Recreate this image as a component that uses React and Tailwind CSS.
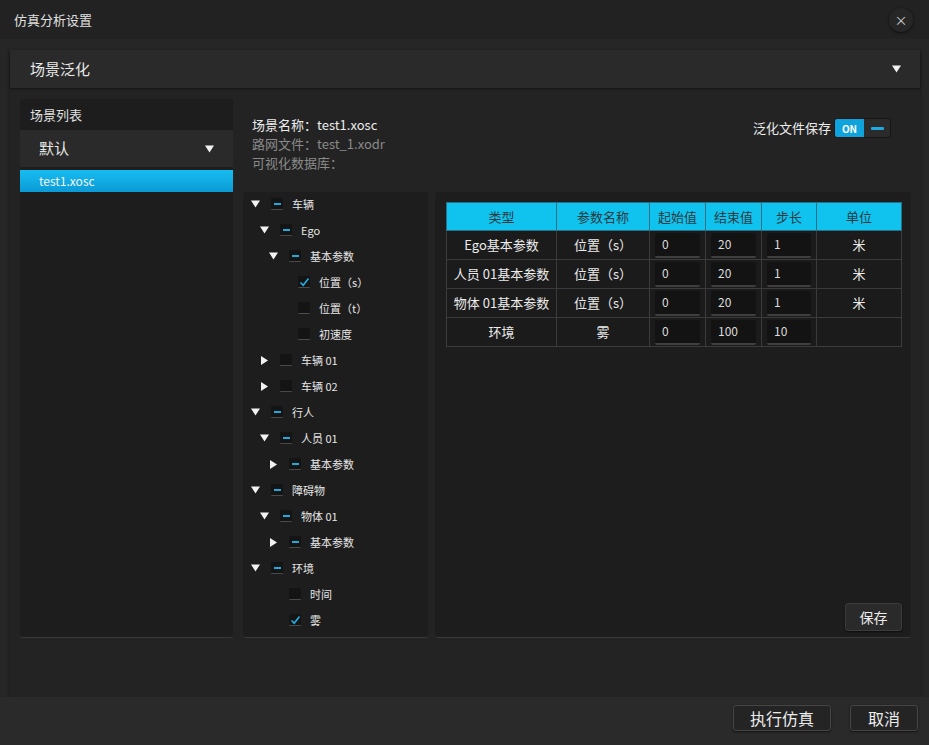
import React from 'react';

const tree = [
  { label: '车辆', level: 0, arrow: 'down', box: 'dash' },
  { label: 'Ego', level: 1, arrow: 'down', box: 'dash' },
  { label: '基本参数', level: 2, arrow: 'down', box: 'dash' },
  { label: '位置（s）', level: 3, arrow: null, box: 'check' },
  { label: '位置（t）', level: 3, arrow: null, box: 'empty' },
  { label: '初速度', level: 3, arrow: null, box: 'empty' },
  { label: '车辆 01', level: 1, arrow: 'right', box: 'empty' },
  { label: '车辆 02', level: 1, arrow: 'right', box: 'empty' },
  { label: '行人', level: 0, arrow: 'down', box: 'dash' },
  { label: '人员 01', level: 1, arrow: 'down', box: 'dash' },
  { label: '基本参数', level: 2, arrow: 'right', box: 'dash' },
  { label: '障碍物', level: 0, arrow: 'down', box: 'dash' },
  { label: '物体 01', level: 1, arrow: 'down', box: 'dash' },
  { label: '基本参数', level: 2, arrow: 'right', box: 'dash' },
  { label: '环境', level: 0, arrow: 'down', box: 'dash' },
  { label: '时间', level: 2, arrow: null, box: 'empty' },
  { label: '雾', level: 2, arrow: null, box: 'check' },
  { label: '', level: 2, arrow: null, box: 'empty' },
];

const indent = ['pl-[8px]', 'pl-[17px]', 'pl-[26px]', 'pl-[35px]'];

const rows = [
  { type: 'Ego基本参数', name: '位置（s）', start: '0', end: '20', step: '1', unit: '米' },
  { type: '人员 01基本参数', name: '位置（s）', start: '0', end: '20', step: '1', unit: '米' },
  { type: '物体 01基本参数', name: '位置（s）', start: '0', end: '20', step: '1', unit: '米' },
  { type: '环境', name: '雾', start: '0', end: '100', step: '10', unit: '' },
];

const DownTri = ({ className = '' }) => (
  <svg width="9" height="8" viewBox="0 0 9 8" className={className}>
    <path d="M0 0.5 L9 0.5 L4.5 7.5 Z" fill="#f2f2f2" />
  </svg>
);

const RightTri = () => (
  <svg width="9" height="9" viewBox="0 0 9 9">
    <path d="M1 0 L8 4.5 L1 9 Z" fill="#f2f2f2" />
  </svg>
);

const Box = ({ kind }) => (
  <div className="w-[12px] h-[12px] bg-[#141414] border-b border-[#4a4a4a] rounded-[1px] flex items-center justify-center">
    {kind === 'dash' && <div className="w-[7px] h-[2px] bg-[#1fa9dc]" />}
    {kind === 'check' && (
      <svg width="11" height="10" viewBox="0 0 11 10">
        <path d="M1.5 5.5 L4.2 8.2 L9.5 1.5" stroke="#1fb0e6" strokeWidth="1.6" fill="none" />
      </svg>
    )}
  </div>
);

const Cell = ({ children, className = '' }) => (
  <td className={`border border-[#3b3b3b] h-[29px] text-[13px] text-[#ececec] ${className}`}>{children}</td>
);

const InputCell = ({ value }) => (
  <td className="border border-[#3b3b3b] h-[29px] px-[5px] py-[1px]">
    <div className="h-[25px] bg-[#131313] border-b-2 border-[#3f3f3f] rounded-[2px] flex items-center pl-[7px] text-[12px] text-[#dcdcdc]">
      {value}
    </div>
  </td>
);

const App = () => {
  return (
    <div
      className="w-[929px] h-[745px] bg-[#262626] flex flex-col overflow-hidden text-[#e6e6e6]"
      style={{ fontFamily: '"Noto Sans CJK SC", "Noto Sans", sans-serif' }}
    >
      {/* title bar */}
      <div className="h-[39px] bg-[#222222] flex items-center justify-between pl-[14px] pr-[16px] shrink-0">
        <span className="text-[13px] text-[#e0e0e0]">仿真分析设置</span>
        <div className="w-[24px] h-[24px] rounded-full bg-[#262626] shadow-[0_1px_3px_rgba(0,0,0,0.6)] flex items-center justify-center text-[#cfcfcf] text-[13px] leading-none">
          ×
        </div>
      </div>

      {/* main panel */}
      <div className="pt-[11px] pl-[10px] pr-[9px] shrink-0">
        <div className="h-[647px] flex flex-col bg-[#232323] shadow-[0_2px_4px_rgba(0,0,0,0.35)]">
          <div className="h-[38px] bg-[#2a2a2a] flex items-center justify-between pl-[20px] pr-[19px] shadow-[0_1px_2px_rgba(0,0,0,0.5)] shrink-0">
            <span className="text-[15px] text-[#e8e8e8]">场景泛化</span>
            <DownTri />
          </div>

          <div className="flex pt-[11px] pl-[10px] pr-[9px] gap-[10px]">
            {/* scene list */}
            <div className="w-[213px] h-[539px] bg-[#1d1d1d] rounded-[3px] border-b border-[#3a3a3a] flex flex-col shrink-0">
              <div className="h-[31px] flex items-center pl-[10px] text-[13px] text-[#e0e0e0]">场景列表</div>
              <div className="h-[37px] bg-[#2a2a2a] flex items-center justify-between pl-[19px] pr-[19px]">
                <span className="text-[15px] text-[#e8e8e8]">默认</span>
                <DownTri />
              </div>
              <div className="mt-[3px] h-[22px] bg-gradient-to-b from-[#17bdf0] to-[#0b9ad6] flex items-center pl-[19px] text-[12px] text-[#f4f4f4]">
                test1.xosc
              </div>
            </div>

            <div className="flex-1 flex flex-col">
              {/* info */}
              <div className="h-[93px] flex justify-between">
                <div className="pl-[9px] pt-[16px] flex flex-col text-[13px] leading-[19px]">
                  <span className="text-[#ececec]">场景名称：test1.xosc</span>
                  <span className="text-[#8a8a8a]">路网文件：test_1.xodr</span>
                  <span className="text-[#8a8a8a]">可视化数据库：</span>
                </div>
                <div className="pt-[19px] pr-[20px] flex items-start gap-[3px]">
                  <span className="text-[13px] text-[#ececec] leading-[20px]">泛化文件保存</span>
                  <div className="w-[57px] h-[20px] flex rounded-[3px] overflow-hidden border border-[#151515] bg-[#2b2b2b]">
                    <div className="w-[29px] bg-[#0ea3dd] flex items-center justify-center text-[10px] font-bold text-white">ON</div>
                    <div className="flex-1 flex items-center justify-center">
                      <div className="w-[13px] h-[3px] bg-[#1fa9dc] rounded-[1px]" />
                    </div>
                  </div>
                </div>
              </div>

              <div className="flex gap-[7px]">
                {/* tree */}
                <div className="w-[185px] h-[446px] bg-[#1d1d1d] rounded-[3px] border-b border-[#3a3a3a] overflow-hidden shrink-0">
                  <div className="-mt-[1px]">
                    {tree.map((n, i) => (
                      <div key={i} className={`h-[26px] flex items-center ${indent[n.level]}`}>
                        <div className="w-[9px] flex items-center justify-center">
                          {n.arrow === 'down' && <DownTri />}
                          {n.arrow === 'right' && <RightTri />}
                        </div>
                        <div className="ml-[11px]">
                          <Box kind={n.box} />
                        </div>
                        <span className="ml-[9px] text-[11px] text-[#e6e6e6]">{n.label}</span>
                      </div>
                    ))}
                  </div>
                </div>

                {/* parameters */}
                <div className="flex-1 h-[446px] bg-[#1d1d1d] rounded-[3px] border-b border-[#3a3a3a] flex flex-col pt-[10px] pl-[11px] pr-[9px] pb-[6px]">
                  <table className="w-full border-collapse table-fixed">
                    <colgroup>
                      <col className="w-[110px]" />
                      <col className="w-[93px]" />
                      <col className="w-[56px]" />
                      <col className="w-[56px]" />
                      <col className="w-[55px]" />
                      <col />
                    </colgroup>
                    <thead>
                      <tr className="bg-[#10c3ef]">
                        {['类型', '参数名称', '起始值', '结束值', '步长', '单位'].map((h) => (
                          <th key={h} className="h-[28px] border border-[#2a6f86] font-normal text-[13px] text-[#2b3a40]">
                            {h}
                          </th>
                        ))}
                      </tr>
                    </thead>
                    <tbody>
                      {rows.map((r, i) => (
                        <tr key={i} className="bg-[#1b1b1b]">
                          <Cell className="text-center">{r.type}</Cell>
                          <Cell className="text-center">{r.name}</Cell>
                          <InputCell value={r.start} />
                          <InputCell value={r.end} />
                          <InputCell value={r.step} />
                          <Cell className="text-center">{r.unit}</Cell>
                        </tr>
                      ))}
                    </tbody>
                  </table>
                  <div className="mt-auto flex justify-end">
                    <button className="w-[57px] h-[28px] bg-[#2a2a2a] border border-[#3c3c3c] rounded-[3px] shadow-[0_1px_2px_rgba(0,0,0,0.6)] text-[14px] text-[#ececec]">
                      保存
                    </button>
                  </div>
                </div>
              </div>
            </div>
          </div>
        </div>
      </div>

      {/* footer */}
      <div className="flex-1 bg-[#2a2a2a] flex justify-end items-start pt-[8px] pr-[11px] gap-[19px]">
        <button className="w-[98px] h-[26px] bg-[#242424] border border-[#454545] rounded-[3px] shadow-[0_1px_2px_rgba(0,0,0,0.6)] text-[16px] text-[#ececec] leading-none">
          执行仿真
        </button>
        <button className="w-[68px] h-[26px] bg-[#242424] border border-[#454545] rounded-[3px] shadow-[0_1px_2px_rgba(0,0,0,0.6)] text-[16px] text-[#ececec] leading-none">
          取消
        </button>
      </div>
    </div>
  );
};

export default App;
